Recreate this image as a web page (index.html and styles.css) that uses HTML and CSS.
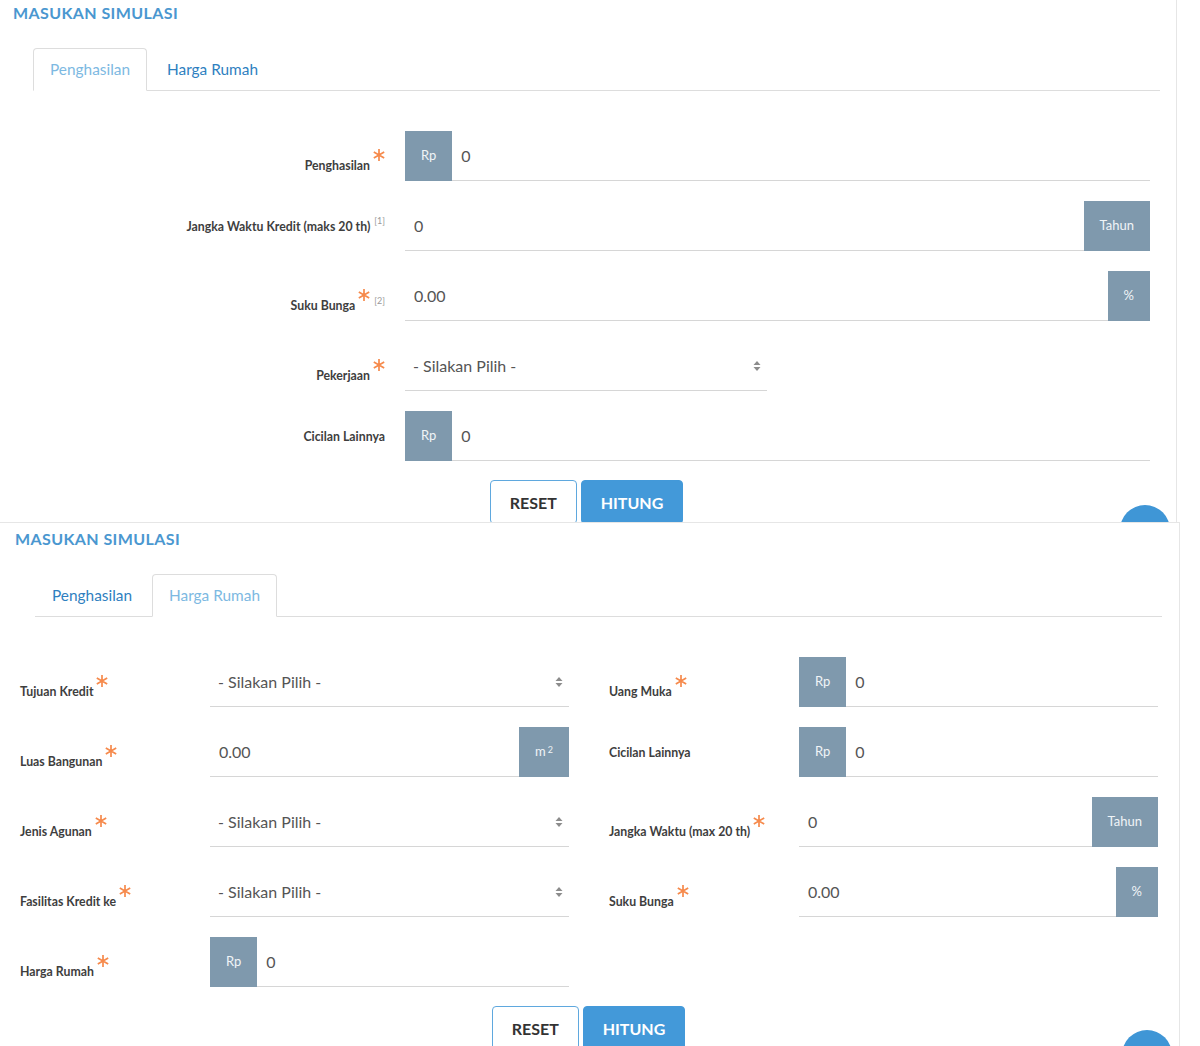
FILE: index.html
```html
<!DOCTYPE html>
<html lang="id">
<head>
    <meta charset="UTF-8">
    <title>Simulasi KPR</title>
    <link rel="stylesheet" href="styles.css">
</head>
<body>
    <!-- Tab penghasilan -->
    <section class="panel panel-income">
        <h2 class="panel-title">MASUKAN SIMULASI</h2>
        <ul class="tabs">
            <li class="tab active">Penghasilan</li>
            <li class="tab">Harga Rumah</li>
        </ul>
        <div class="form form-income">
            <div class="row">
                <label class="lbl req"><span class="lbl-text">Penghasilan</span><svg class="star" viewBox="0 0 12 12"><path d="M6 0V12M0.8 3L11.2 9M0.8 9L11.2 3"/></svg></label>
                <div class="field"><span class="addon">Rp</span><input class="input" type="text" value="0"></div>
            </div>
            <div class="row">
                <label class="lbl"><span class="lbl-text">Jangka Waktu Kredit (maks 20 th)</span><span class="note">[1]</span></label>
                <div class="field"><input class="input" type="text" value="0"><span class="addon">Tahun</span></div>
            </div>
            <div class="row">
                <label class="lbl req"><span class="lbl-text">Suku Bunga</span><svg class="star" viewBox="0 0 12 12"><path d="M6 0V12M0.8 3L11.2 9M0.8 9L11.2 3"/></svg><span class="note">[2]</span></label>
                <div class="field"><input class="input" type="text" value="0.00"><span class="addon">%</span></div>
            </div>
            <div class="row">
                <label class="lbl req"><span class="lbl-text">Pekerjaan</span><svg class="star" viewBox="0 0 12 12"><path d="M6 0V12M0.8 3L11.2 9M0.8 9L11.2 3"/></svg></label>
                <div class="field">
                    <div class="select short"><span>- Silakan Pilih -</span><svg class="caret" viewBox="0 0 8 10"><path d="M4 0L7.5 4H0.5ZM4 10L7.5 6H0.5Z"/></svg></div>
                </div>
            </div>
            <div class="row">
                <label class="lbl"><span class="lbl-text">Cicilan Lainnya</span></label>
                <div class="field"><span class="addon">Rp</span><input class="input" type="text" value="0"></div>
            </div>
        </div>
        <div class="actions">
            <button class="btn btn-reset" type="button">RESET</button>
            <button class="btn btn-count" type="button">HITUNG</button>
        </div>
        <span class="fab"></span>
    </section>

    <!-- Tab harga rumah -->
    <section class="panel panel-house">
        <h2 class="panel-title">MASUKAN SIMULASI</h2>
        <ul class="tabs">
            <li class="tab">Penghasilan</li>
            <li class="tab active">Harga Rumah</li>
        </ul>
        <div class="form form-house">
            <div class="col">
                <label class="lbl req"><span class="lbl-text">Tujuan Kredit</span><svg class="star" viewBox="0 0 12 12"><path d="M6 0V12M0.8 3L11.2 9M0.8 9L11.2 3"/></svg></label>
                <div class="field">
                    <div class="select"><span>- Silakan Pilih -</span><svg class="caret" viewBox="0 0 8 10"><path d="M4 0L7.5 4H0.5ZM4 10L7.5 6H0.5Z"/></svg></div>
                </div>

                <label class="lbl req"><span class="lbl-text">Luas Bangunan</span><svg class="star" viewBox="0 0 12 12"><path d="M6 0V12M0.8 3L11.2 9M0.8 9L11.2 3"/></svg></label>
                <div class="field"><input class="input" type="text" value="0.00"><span class="addon">m <sup>2</sup></span></div>

                <label class="lbl req"><span class="lbl-text">Jenis Agunan</span><svg class="star" viewBox="0 0 12 12"><path d="M6 0V12M0.8 3L11.2 9M0.8 9L11.2 3"/></svg></label>
                <div class="field">
                    <div class="select"><span>- Silakan Pilih -</span><svg class="caret" viewBox="0 0 8 10"><path d="M4 0L7.5 4H0.5ZM4 10L7.5 6H0.5Z"/></svg></div>
                </div>

                <label class="lbl req"><span class="lbl-text">Fasilitas Kredit ke</span><svg class="star" viewBox="0 0 12 12"><path d="M6 0V12M0.8 3L11.2 9M0.8 9L11.2 3"/></svg></label>
                <div class="field">
                    <div class="select"><span>- Silakan Pilih -</span><svg class="caret" viewBox="0 0 8 10"><path d="M4 0L7.5 4H0.5ZM4 10L7.5 6H0.5Z"/></svg></div>
                </div>

                <label class="lbl req"><span class="lbl-text">Harga Rumah</span><svg class="star" viewBox="0 0 12 12"><path d="M6 0V12M0.8 3L11.2 9M0.8 9L11.2 3"/></svg></label>
                <div class="field"><span class="addon">Rp</span><input class="input" type="text" value="0"></div>
            </div>
            <div class="col">
                <label class="lbl req"><span class="lbl-text">Uang Muka</span><svg class="star" viewBox="0 0 12 12"><path d="M6 0V12M0.8 3L11.2 9M0.8 9L11.2 3"/></svg></label>
                <div class="field"><span class="addon">Rp</span><input class="input" type="text" value="0"></div>

                <label class="lbl"><span class="lbl-text">Cicilan Lainnya</span></label>
                <div class="field"><span class="addon">Rp</span><input class="input" type="text" value="0"></div>

                <label class="lbl req"><span class="lbl-text">Jangka Waktu (max 20 th)</span><svg class="star" viewBox="0 0 12 12"><path d="M6 0V12M0.8 3L11.2 9M0.8 9L11.2 3"/></svg></label>
                <div class="field"><input class="input" type="text" value="0"><span class="addon">Tahun</span></div>

                <label class="lbl req"><span class="lbl-text">Suku Bunga</span><svg class="star" viewBox="0 0 12 12"><path d="M6 0V12M0.8 3L11.2 9M0.8 9L11.2 3"/></svg></label>
                <div class="field"><input class="input" type="text" value="0.00"><span class="addon">%</span></div>
            </div>
        </div>
        <div class="actions">
            <button class="btn btn-reset" type="button">RESET</button>
            <button class="btn btn-count" type="button">HITUNG</button>
        </div>
        <span class="fab"></span>
    </section>
</body>
</html>
```

FILE: styles.css
```css
body, html {
    margin: 0;
    padding: 0;
    background: #fff;
    font-family: Lato, "Open Sans", Arial, sans-serif;
}

.panel {
    position: relative;
    box-sizing: border-box;
    overflow: hidden;
    border-right: 1px solid #e6e6e6;
}

.panel-income {
    width: 1177px;
    height: 522px;
    padding: 2px 16px 0 13px;
}

.panel-house {
    width: 1180px;
    height: 524px;
    padding: 5px 17px 0 15px;
    border-top: 1px solid #e6e6e6;
}

.panel-title {
    margin: 0;
    font-size: 16px;
    line-height: 22px;
    font-weight: bold;
    letter-spacing: 0.4px;
    color: #4a97d0;
}

/* tabs */
.tabs {
    display: flex;
    list-style: none;
    margin: 24px 0 0 20px;
    padding: 0;
    border-bottom: 1px solid #dddddd;
}

.tab {
    padding: 10px 16px 11px;
    line-height: 20px;
    font-size: 15.4px;
    color: #2f7fbf;
    border: 1px solid transparent;
    border-radius: 4px 4px 0 0;
    margin-right: 3px;
    margin-bottom: -1px;
}

.tab.active {
    color: #7db9e2;
    border-color: #dddddd #dddddd #fff;
    background: #fff;
}

/* form */
.form {
    margin-top: 40px;
}

.form-income {
    display: flex;
    flex-direction: column;
    gap: 20px;
}

.form-income .row {
    display: grid;
    grid-template-columns: 372px 745px;
    column-gap: 20px;
}

.form-house {
    display: flex;
    gap: 40px;
    margin-left: 5px;
}

.form-house .col {
    display: grid;
    grid-template-columns: 190px 359px;
    grid-auto-rows: 50px;
    row-gap: 20px;
    align-content: start;
}

.lbl {
    display: flex;
    align-items: center;
    justify-content: flex-end;
    gap: 3px;
    font-size: 12.3px;
    font-weight: bold;
    color: #3e3e3e;
}

.form-house .lbl {
    justify-content: flex-start;
}

.lbl.req .lbl-text {
    margin-top: 19px;
}

.star {
    width: 12px;
    height: 12px;
    margin-bottom: 2px;
    fill: none;
    stroke: #f68a4c;
    stroke-width: 1.7;
}

.note {
    font-size: 9px;
    font-weight: normal;
    color: #9a9a9a;
    margin-top: -12px;
    margin-left: 1px;
}

.lbl.req .note {
    margin-top: 8px;
}

.field {
    display: flex;
    height: 50px;
}

.input {
    flex: 1;
    min-width: 0;
    box-sizing: border-box;
    height: 50px;
    margin: 0;
    padding: 0 9px;
    border: 0;
    border-bottom: 1px solid #d6d6d6;
    outline: none;
    background: transparent;
    font-family: Lato, "Open Sans", Arial, sans-serif;
    font-size: 16px;
    color: #555;
}

.addon {
    display: flex;
    align-items: center;
    justify-content: center;
    padding: 0 16px 2px;
    background: #7f99ad;
    color: #f0f4f7;
    font-size: 13px;
}

.addon sup {
    font-size: 9px;
    margin-left: 2px;
    position: relative;
    top: -2px;
}

.select {
    flex: 1;
    display: flex;
    align-items: center;
    justify-content: space-between;
    box-sizing: border-box;
    padding: 0 6px 0 8px;
    border-bottom: 1px solid #d6d6d6;
    font-size: 16px;
    color: #555;
}

.select.short {
    flex: none;
    width: 362px;
}

.caret {
    width: 8px;
    height: 10px;
    fill: #8c8c8c;
}

/* buttons */
.actions {
    display: flex;
    justify-content: center;
    gap: 4px;
    margin-top: 19px;
}

.btn {
    height: 44px;
    padding: 0 19px;
    border: 1px solid #4399d9;
    border-radius: 4px;
    font-family: Lato, "Open Sans", Arial, sans-serif;
    font-size: 16px;
    font-weight: bold;
}

.btn-reset {
    background: #fff;
    color: #333;
    border-color: #5fa8de;
}

.btn-count {
    background: #4399d9;
    color: #fff;
}

.fab {
    position: absolute;
    width: 50px;
    height: 50px;
    border-radius: 50%;
    background: #3f96d6;
}

.panel-income .fab {
    left: 1120px;
    top: 505px;
}

.panel-house .fab {
    left: 1122px;
    top: 507px;
}
```
